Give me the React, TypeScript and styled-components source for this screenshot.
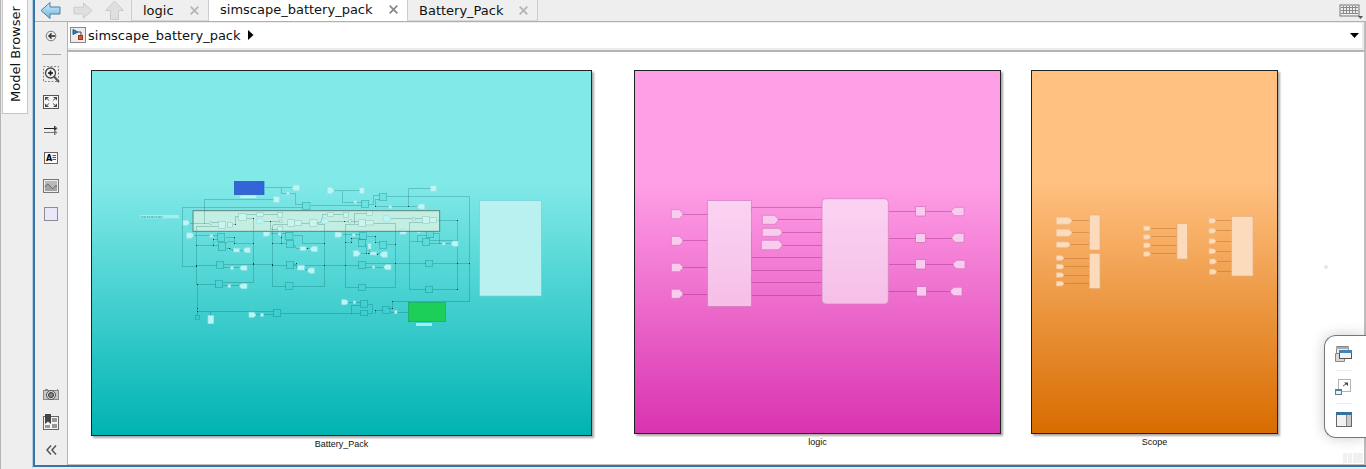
import React from "react";
import styled, { createGlobalStyle } from "styled-components";

const Global = createGlobalStyle`
  * { box-sizing: border-box; }
  body { margin: 0; background: #eeeeee; font-family: "DejaVu Sans", sans-serif; font-size: 13px; color: #111; }
  button { font: inherit; color: inherit; background: none; border: 0; padding: 0; margin: 0; }
  svg { display: block; }
`;

const Shell = styled.div`
  display: flex;
  min-height: 100vh;
`;

const SideStrip = styled.aside`
  width: 32px;
  flex: none;
  border-left: 1px solid #b4b4b4;
  padding-left: 1px;
`;

const SideTab = styled.button`
  display: flex;
  align-items: center;
  justify-content: flex-start;
  width: 26px;
  height: 114px;
  padding-top: 11px;
  background: #fff;
  border: 1px solid #c6c6c6;
  border-bottom: 0;
  writing-mode: vertical-rl;
  transform: rotate(180deg);
  white-space: nowrap;
`;

const Frame = styled.div`
  flex: 1;
  min-width: 0;
  display: flex;
  flex-direction: column;
  border-left: 1px solid #b5cfe4;
  border-bottom: 2px solid #e6eef6;
`;

const Editor = styled.main`
  flex: 1;
  display: flex;
  flex-direction: column;
  border-left: 2px solid #3b74a4;
  border-bottom: 2px solid #3b74a4;
`;

const TabBar = styled.header`
  display: flex;
  align-items: stretch;
  height: 22px;
  border-bottom: 1px solid #b0b0b0;
`;

const NavButtons = styled.div`
  display: flex;
  width: 96px;
  gap: 12px;
  padding-left: 5px;
  flex: none;
`;

const Tab = styled.div<{ $active?: boolean; $width: number }>`
  display: flex;
  align-items: center;
  justify-content: space-between;
  width: ${(p) => p.$width}px;
  height: 21px;
  padding: 0 9px ${(p) => (p.$active ? 3 : 0)}px 11px;
  background: ${(p) => (p.$active ? "#fff" : "#efefef")};
  border-left: 1px solid #cdcdcd;
  border-bottom: ${(p) => (p.$active ? "0" : "1px solid #d8d8d8")};
`;

const TabEnd = styled.div`
  flex: 1;
  display: flex;
  justify-content: flex-end;
  padding: 2px 3px 0 0;
  border-left: 1px solid #cdcdcd;
`;

const Body = styled.div`
  flex: 1;
  display: flex;
`;

const Tools = styled.nav`
  display: flex;
  flex-direction: column;
  align-items: center;
  width: 33px;
  flex: none;
  padding: 4px 0 5px;
  border-right: 1px solid #b4b4b4;
  gap: 8px;
`;

const ToolButton = styled.button`
  display: flex;
  align-items: center;
  justify-content: center;
  width: 24px;
  height: 20px;
`;

const ToolRule = styled.hr`
  width: 19px;
  margin: 0 0 1px;
  border: 0;
  border-top: 1px solid #aaa;
`;

const Spacer = styled.div`
  flex: 1;
`;

const Work = styled.div`
  flex: 1;
  min-width: 0;
  display: flex;
  flex-direction: column;
  border-right: 2px solid #bdbdbd;
`;

const Crumbs = styled.div`
  display: flex;
  align-items: center;
  height: 30px;
  padding: 0 5px 2px 2px;
  gap: 2px;
  background: #fff;
  border-bottom: 2px solid #b4b4b4;
  box-shadow: inset 0 1px #ececec, inset 0 -2px #ececec, inset -2px 0 #ececec;
`;

const Crumb = styled.button`
  display: flex;
  align-items: center;
  gap: 7px;
`;

const Canvas = styled.section`
  position: relative;
  flex: 1;
  display: flex;
  align-items: flex-start;
  padding: 18px 0 8px 23px;
  background: #fff;
  border-bottom: 1px solid #c0c0c0;
`;

const Subsystem = styled.figure<{ $gap: number }>`
  margin: 0 ${(p) => p.$gap}px 0 0;
  flex: none;
`;

const Block = styled.div<{ $w: number; $h: number; $from: string; $to: string; $x: number; $y: number }>`
  width: ${(p) => p.$w}px;
  height: ${(p) => p.$h}px;
  padding: ${(p) => p.$y}px 0 0 ${(p) => p.$x}px;
  border: 1px solid #1c2424;
  background: linear-gradient(${(p) => p.$from} 31%, ${(p) => p.$to});
  box-shadow: 2px 2px 2px rgba(0, 0, 0, 0.35);
`;

const Caption = styled.figcaption`
  padding-top: 3px;
  font: 9px/10px "Liberation Sans", sans-serif;
  text-align: center;
`;

const Speck = styled.span`
  position: absolute;
  right: 36px;
  top: 213px;
  width: 4px;
  height: 4px;
  border-radius: 2px;
  background: #dbe9f1;
`;

const Palette = styled.div`
  position: absolute;
  right: -2px;
  bottom: 26px;
  width: 42px;
  display: flex;
  flex-direction: column;
  align-items: center;
  gap: 6px;
  padding: 8px 4px 7px 0;
  background: #fff;
  border: 1px solid #777;
  border-right: 0;
  border-radius: 12px 0 0 12px;
  box-shadow: 0 0 14px rgba(0, 0, 0, 0.2);
`;

const PaletteButton = styled.button`
  display: flex;
  width: 20px;
  height: 20px;
  align-items: center;
  justify-content: center;
`;

const PaletteRule = styled.hr`
  width: 16px;
  margin: 0;
  border: 0;
  border-top: 1px solid #ececec;
`;

const Resize = styled.div`
  position: absolute;
  right: 1px;
  bottom: 1px;
`;

/* Diagram thumbnails are drawn on a grid of three units to a pixel. */
const snap = (v: number) => Math.floor(v / 3) * 3 + 1.5;

const Wires = ({ data, color }: { data: string[]; color: string }) => (
  <g fill="none" stroke={color} strokeWidth={3} shapeRendering="crispEdges">
    {data.map((line) => (
      <polyline
        key={line}
        points={line
          .split(" ")
          .map((p) => p.split(",").map((v) => snap(Number(v))).join(","))
          .join(" ")}
      />
    ))}
  </g>
);

type Rect = [number, number, number, number];

const Boxes = ({ data, fill, stroke }: { data: Rect[]; fill: string; stroke: string }) => (
  <g fill={fill} stroke={stroke} strokeWidth={2}>
    {data.map(([x, y, w, h]) => (
      <rect key={`${x},${y}`} x={x} y={y} width={w} height={h} />
    ))}
  </g>
);

const Ports = ({ data, fill, stroke, left }: { data: Rect[]; fill: string; stroke: string; left?: boolean }) => (
  <g fill={fill} stroke={stroke} strokeWidth={2}>
    {data.map(([px, py, pw, ph]) => {
      const x = px - 1;
      const y = py - 1;
      const w = pw + 2;
      const h = ph + 2;
      const t = h * 0.38;
      return (
        <path
          key={`${x},${y}`}
          d={
            left
              ? `M${x + w} ${y}H${x + t}L${x} ${y + t}V${y + h - t}L${x + t} ${y + h}H${x + w}Z`
              : `M${x} ${y}H${x + w - t}L${x + w} ${y + t}V${y + h - t}L${x + w - t} ${y + h}H${x}Z`
          }
        />
      );
    })}
  </g>
);

const batteryWires = [
  "402,52 488,52", "455,52 455,70 497,70 497,104 517,104", "223,160 223,88 432,88",
  "157,289 157,112 517,112", "157,289 199,289", "540,106 694,106", "176,160 238,160", "244,158 265,158",
  "199,343 199,168 265,168", "307,163 316,163 316,139 326,139", "349,134 380,134", "349,145 370,145 370,337 278,337",
  "400,134 443,134", "400,154 448,154", "421,154 421,178 443,178", "515,159 539,159",
  "427,163 473,163", "427,163 427,349 467,349", "562,159 575,154", "562,163 583,163 583,349 488,349", "575,154 578,134 592,134",
  "610,134 640,134", "595,154 656,154", "189,197 262,197", "285,202 313,202 313,220 370,220", "250,226 250,208 262,208",
  "199,226 265,226", "287,220 295,214 313,214", "287,235 298,235 310,240 340,240",
  "199,286 260,286", "281,283 427,283", "281,292 330,292", "427,286 470,286", "491,286 646,286",
  "491,286 499,280 499,292 535,300", "202,343 256,343", "278,346 330,346", "202,343 202,436",
  "202,424 430,424", "242,424 242,436", "376,434 430,434", "452,430 692,430",
  "420,191 467,191", "455,191 455,220 470,220", "427,220 455,220", "489,196 517,196 517,220 583,220", "491,224 500,235 545,235",
  "611,61 688,61", "638,61 638,97 694,97", "716,102 730,102 730,76 748,76", "736,109 736,88 748,88", "736,109 865,109",
  "770,79 1018,79 1018,394 787,394 787,415 770,415", "835,109 835,55 901,55",
  "710,130 673,130 673,159", "646,352 646,163 686,163", "646,352 686,352", "706,352 796,352 796,160 731,160",
  "780,145 876,145", "838,358 838,157 876,157", "838,358 886,358", "908,358 982,358 982,151 921,151",
  "660,154 686,154", "646,286 686,286", "706,280 886,280", "908,280 1018,280", "706,292 760,292",
  "635,194 688,194", "664,205 664,217 646,217", "664,205 690,205", "709,199 736,199 736,217 748,217", "770,223 796,223",
  "706,224 718,235 718,250 750,250", "709,229 709,250 690,250", "830,185 888,185", "862,214 862,196 888,196", "838,214 877,214",
  "898,211 982,211", "911,190 928,190 928,220 965,220", "898,220 928,220",
  "653,397 692,397", "664,430 664,406 692,406", "713,403 727,403 727,430 713,430", "736,430 736,421 757,421", "781,426 834,426",
];

const batteryOutlines: Rect[] = [
  [517, 97, 23, 21], [262, 190, 22, 24], [265, 218, 22, 23], [260, 274, 21, 21], [256, 331, 21, 22], [430, 418, 22, 22],
  [467, 187, 22, 22], [469, 211, 22, 22], [469, 274, 22, 22], [467, 338, 22, 20], [196, 436, 12, 12],
  [694, 91, 22, 21], [748, 70, 22, 21], [688, 188, 21, 21], [685, 209, 22, 21], [748, 214, 22, 21], [685, 274, 21, 22],
  [685, 343, 21, 18], [877, 205, 22, 21], [889, 184, 22, 19], [886, 271, 22, 18], [886, 349, 22, 19],
  [692, 391, 21, 21], [692, 421, 21, 16], [757, 409, 23, 21],
];

const batteryFilled: Rect[] = [
  [431, 80, 17, 17], [470, 66, 8, 8], [234, 437, 17, 24], [503, 286, 20, 14], [311, 235, 17, 11], [510, 230, 18, 11],
  [240, 194, 8, 8], [302, 290, 8, 8], [294, 344, 8, 8], [392, 431, 8, 8], [445, 188, 8, 8], [688, 53, 15, 17],
  [902, 47, 17, 17], [672, 92, 8, 8], [777, 107, 8, 8], [714, 221, 9, 16], [721, 246, 18, 9],
  [727, 288, 7, 7], [667, 191, 8, 8], [862, 183, 8, 6], [937, 218, 8, 7], [670, 393, 7, 7], [794, 422, 7, 8],
];

const bandParts: Rect[] = [
  [326, 130, 23, 21], [265, 154, 22, 21], [292, 158, 15, 14], [238, 155, 7, 8], [380, 128, 20, 11], [443, 127, 15, 15],
  [448, 150, 8, 7], [473, 149, 20, 20], [494, 151, 21, 15], [443, 170, 15, 15], [539, 149, 22, 20], [592, 128, 18, 11],
  [640, 127, 15, 15], [656, 149, 8, 8], [686, 149, 21, 20], [707, 152, 23, 13], [710, 122, 17, 14], [847, 143, 9, 7],
  [877, 140, 21, 20], [898, 143, 21, 14],
];

const batteryPorts: Rect[] = [
  [160, 152, 17, 13], [171, 189, 18, 15], [358, 428, 18, 13], [401, 184, 18, 14], [380, 147, 20, 13], [577, 147, 18, 13],
  [593, 53, 18, 17], [616, 187, 19, 14], [636, 390, 17, 13], [761, 137, 20, 17], [811, 179, 19, 13], [671, 243, 18, 15],
];

const batteryPortsLeft: Rect[] = [
  [488, 46, 20, 15], [342, 234, 18, 13], [331, 288, 19, 12], [330, 342, 20, 13], [542, 230, 19, 14], [534, 295, 18, 14],
  [864, 103, 19, 14], [752, 246, 19, 15], [763, 285, 19, 13], [965, 214, 18, 14],
];

const joints: [number, number][] = [
  [199, 226], [250, 226], [250, 208], [313, 202], [313, 220], [298, 235], [370, 220], [370, 280], [370, 283], [199, 286],
  [199, 289], [202, 343], [202, 415], [202, 424], [316, 163], [370, 145], [421, 154], [427, 220], [427, 283], [427, 286],
  [455, 220], [455, 202], [583, 220], [583, 286], [532, 235], [499, 280], [646, 286], [643, 154], [646, 217], [736, 109],
  [835, 109], [736, 199], [736, 217], [796, 223], [796, 280], [664, 205], [664, 217], [709, 250], [715, 250], [742, 252],
  [982, 151], [982, 280], [1018, 280], [982, 358], [787, 394], [787, 415], [736, 421],
];

const BatteryDiagram = () => (
  <svg width="420" height="160" viewBox="0 0 1260 480" aria-hidden="true">
    <rect x="189" y="122" width="740" height="62" fill="#c3eee2" />
    <rect x="1049" y="92" width="185" height="286" fill="#b9f0f0" stroke="#79cfd0" strokeWidth="2" />
    <Wires data={batteryWires} color="rgba(0,80,85,.24)" />
    <Boxes data={batteryOutlines} fill="rgba(60,215,215,.2)" stroke="rgba(0,110,115,.42)" />
    <Boxes data={bandParts} fill="#c9f5ee" stroke="#9bcdc6" />
    <Boxes data={batteryFilled} fill="#bdf5f4" stroke="#9be2e3" />
    <Ports data={batteryPorts} fill="#bdf5f4" stroke="#9be2e3" />
    <Ports data={batteryPortsLeft} fill="#bdf5f4" stroke="#9be2e3" left />
    <rect x="189" y="122" width="740" height="62" fill="none" stroke="#5d8580" strokeWidth="3" />
    <g fill="#063f43">
      {joints.map(([x, y]) => (
        <rect key={`${x},${y}`} x={snap(x) - 1.5} y={snap(y) - 1.5} width="3" height="3" />
      ))}
    </g>
    <rect x="313" y="34" width="89" height="40" fill="#3465d8" stroke="#2b57b8" strokeWidth="2" />
    <rect x="331" y="76" width="48" height="8" fill="#b9f5f5" />
    <rect x="835" y="397" width="111" height="58" fill="#1ccf58" stroke="#1ba766" strokeWidth="2" />
    <rect x="858" y="459" width="48" height="9" fill="#a2eeee" />
    <rect x="31" y="135" width="116" height="10" fill="#a4eeee" />
    <path d="M33 141H98" stroke="#3b999c" strokeWidth="3" strokeDasharray="5 2 9 2 3 1" />
  </svg>
);

const logicWires = [
  "66,73 143,73", "66,152 143,152", "66,232 143,232", "66,313 143,313",
  "275,64 275,52 486,52", "353,88 486,88", "365,127 486,127", "366,165 486,165",
  "275,127 275,202 486,202", "275,202 275,241 486,241", "275,253 275,277 486,277", "275,316 486,316",
  "685,64 876,64", "685,145 876,145", "685,223 881,223", "685,304 873,304",
];

const LogicDiagram = () => (
  <svg width="320" height="130" viewBox="0 0 960 390" aria-hidden="true">
    <defs>
      <linearGradient id="pinkPanel" x1="0" y1="0" x2="0" y2="1">
        <stop offset="0" stopColor="#fbd2f2" />
        <stop offset="1" stopColor="#f5bfe8" />
      </linearGradient>
    </defs>
    <Wires data={logicWires} color="rgba(120,10,100,.3)" />
    <g fill="url(#pinkPanel)" stroke="#cb80b9" strokeWidth="2">
      <rect x="143" y="32" width="131" height="317" />
      <rect x="486" y="26" width="199" height="316" rx="12" />
    </g>
    <Ports
      data={[[35, 60, 32, 25], [35, 140, 32, 25], [35, 221, 32, 23], [35, 299, 32, 25], [308, 77, 45, 25], [308, 116, 57, 22], [305, 152, 60, 26]]}
      fill="#f9cbee"
      stroke="#d078ba"
    />
    <Ports data={[[876, 53, 35, 23], [877, 131, 34, 25], [881, 212, 33, 23], [873, 293, 32, 23]]} fill="#f9cbee" stroke="#d078ba" left />
    <Boxes data={[[767, 50, 29, 28], [767, 131, 29, 26], [767, 209, 29, 28], [770, 290, 29, 28]]} fill="#f9cbee" stroke="#c772b2" />
  </svg>
);

const scopeWires = [
  "94,62 147,62", "94,98 147,98", "89,133 147,133", "70,175 147,175", "70,200 147,200", "70,226 147,226", "70,251 147,251",
  "330,86 410,86", "330,109 410,109", "330,136 410,136", "330,160 410,160",
  "527,62 575,62", "527,92 575,92", "527,125 575,125", "527,154 575,154", "529,185 575,185", "529,215 575,215",
];

const ScopeDiagram = () => (
  <svg width="230" height="100" viewBox="0 0 690 300" aria-hidden="true">
    <Wires data={scopeWires} color="rgba(140,75,10,.28)" />
    <Boxes data={[[148, 45, 32, 105], [148, 160, 32, 105], [411, 71, 31, 106], [575, 49, 64, 179]]} fill="#fbdbbb" stroke="#dfb084" />
    <Ports
      data={[
        [50, 53, 44, 19], [50, 89, 44, 19], [50, 127, 39, 14], [50, 168, 20, 12], [50, 194, 20, 12], [50, 219, 20, 12], [50, 245, 20, 12],
        [312, 79, 18, 12], [312, 105, 18, 12], [312, 130, 18, 12], [312, 156, 18, 12],
        [508, 56, 18, 13], [508, 86, 18, 13], [508, 117, 18, 13], [508, 147, 18, 13], [510, 178, 18, 13], [510, 209, 18, 13],
      ]}
      fill="#fbdcbd"
      stroke="#eec096"
    />
  </svg>
);

const CloseButton = ({ active, name }: { active?: boolean; name: string }) => (
  <button aria-label={`Close ${name}`}>
    <svg width="9" height="9" viewBox="0 0 9 9" stroke={active ? "#8a8a8a" : "#b6b6b6"} strokeWidth="1.8">
      <path d="M.7 .7L8.3 8.3M8.3 .7L.7 8.3" />
    </svg>
  </button>
);

const tabs = [
  { name: "logic", width: 77 },
  { name: "simscape_battery_pack", width: 199, active: true },
  { name: "Battery_Pack", width: 130 },
];

export default function App() {
  return (
    <>
      <Global />
      <Shell>
        <SideStrip>
          <SideTab>Model Browser</SideTab>
        </SideStrip>
        <Frame>
          <Editor>
            <TabBar>
              <NavButtons>
                <button aria-label="Back">
                  <svg width="21" height="20" viewBox="0 0 21 20">
                    <defs>
                      <linearGradient id="backFill" x1="0" y1="0" x2="0" y2="1">
                        <stop offset="0" stopColor="#d3ecfb" />
                        <stop offset="1" stopColor="#71b4e0" />
                      </linearGradient>
                    </defs>
                    <path d="M1 9.5L10 1.5V6H20V13H10V17.5Z" fill="url(#backFill)" stroke="#4b80a5" />
                  </svg>
                </button>
                <button aria-label="Forward">
                  <svg width="20" height="20" viewBox="0 0 21 20">
                    <path d="M20 9.5L11 1.5V6H1V13H11V17.5Z" fill="#dfdfdf" stroke="#cacaca" />
                  </svg>
                </button>
                <button aria-label="Up">
                  <svg width="19" height="20" viewBox="0 0 19 20">
                    <path d="M9.5 0L18.3 9.5H13.5V18.5H5.5V9.5H.7Z" fill="#dfdfdf" stroke="#cacaca" />
                  </svg>
                </button>
              </NavButtons>
              {tabs.map((t) => (
                <Tab key={t.name} $active={t.active} $width={t.width}>
                  <button>{t.name}</button>
                  <CloseButton active={t.active} name={t.name} />
                </Tab>
              ))}
              <TabEnd>
                <button aria-label="Keyboard shortcuts">
                  <svg width="24" height="16" viewBox="0 0 24 16">
                    <rect x="1" y="1" width="19" height="11" fill="#eee" stroke="#777" />
                    <path d="M2 3.5H19M2 6.5H19M2 9.5H19" stroke="#8a8a8a" />
                    <path d="M4.5 2V9M7.5 2V9M10.5 2V9M13.5 2V9M16.5 2V9" stroke="#8a8a8a" />
                    <path d="M19 12H24L21.5 15Z" fill="#555" />
                  </svg>
                </button>
              </TabEnd>
            </TabBar>
            <Body>
              <Tools aria-label="Canvas tools">
                <ToolButton aria-label="Hide browser">
                  <svg width="12" height="12" viewBox="0 0 12 12" fill="none" stroke="#555">
                    <circle cx="6" cy="6" r="4.8" stroke="#777" />
                    <path d="M6.5 3L3.5 6L6.5 9" fill="#333" stroke="#333" />
                    <path d="M6 6H10" strokeWidth="2" />
                  </svg>
                </ToolButton>
                <ToolRule />
                <ToolButton aria-label="Zoom">
                  <svg width="18" height="18" viewBox="0 0 18 18" fill="none">
                    <rect x="1.5" y="1.5" width="15" height="15" stroke="#888" strokeDasharray="2 1.5" />
                    <circle cx="8.5" cy="8" r="5" fill="#f2f2f2" stroke="#444" strokeWidth="1.3" />
                    <path d="M8.5 5.5V10.5M6 8H11" stroke="#111" strokeWidth="1.6" />
                    <path d="M12 11.5L17 17" stroke="#555" strokeWidth="2" />
                  </svg>
                </ToolButton>
                <ToolButton aria-label="Fit to view">
                  <svg width="16" height="14" viewBox="0 0 16 14" fill="none">
                    <rect x=".5" y=".5" width="15" height="13" fill="#f7f7f7" stroke="#555" />
                    <path d="M2 2H6L2 5.5ZM14 2H10L14 5.5ZM2 12H6L2 8.5ZM14 12H10L14 8.5Z" fill="#444" />
                    <path d="M3 3L6.2 5.6M13 3L9.8 5.6M3 11L6.2 8.4M13 11L9.8 8.4" stroke="#555" />
                  </svg>
                </ToolButton>
                <ToolButton aria-label="Sample time">
                  <svg width="14" height="12" viewBox="0 0 14 12" fill="none">
                    <path d="M0 4.5H12" stroke="#222" />
                    <path d="M10.5 2L13 4.5L10.5 6.5Z" stroke="#333" />
                    <path d="M0 8.5H12M10.5 6.5L13 8.5L10.5 11Z" stroke="#777" />
                  </svg>
                </ToolButton>
                <ToolButton aria-label="Annotation">
                  <svg width="14" height="12" viewBox="0 0 14 12">
                    <rect x=".5" y=".5" width="13" height="11" fill="#fafafa" stroke="#666" />
                    <text x="2" y="9" fontSize="8" fontWeight="700" fontFamily="DejaVu Sans, sans-serif">A</text>
                    <path d="M8.5 3.5H12M8.5 5.5H12M8.5 7.5H12" stroke="#555" />
                  </svg>
                </ToolButton>
                <ToolButton aria-label="Image">
                  <svg width="16" height="14" viewBox="0 0 16 14">
                    <rect x=".5" y=".5" width="15" height="13" fill="#eee" stroke="#777" />
                    <rect x="2" y="2" width="12" height="10" fill="#b9b9b9" />
                    <path d="M2 8Q4.5 3 7 7T11 8T14 6V12H2Z" fill="#a3a3a3" />
                    <path d="M2 8Q4.5 3 7 7T11 8.5T14 7" fill="none" stroke="#666" />
                  </svg>
                </ToolButton>
                <ToolButton aria-label="Area">
                  <svg width="14" height="14" viewBox="0 0 14 14">
                    <rect x=".5" y=".5" width="13" height="13" fill="#e8e8f8" stroke="#8c8c94" />
                  </svg>
                </ToolButton>
                <Spacer />
                <ToolButton aria-label="Screenshot">
                  <svg width="16" height="13" viewBox="0 0 16 13">
                    <path d="M2 1H5V2H14V1H15V2H16V12H0V2H2Z" fill="#888" />
                    <rect x="1" y="3" width="14" height="8" fill="#c9c9c9" />
                    <circle cx="8" cy="7" r="4.5" fill="#ddd" stroke="#555" />
                    <circle cx="8" cy="7" r="2.5" fill="#888" stroke="#333" />
                  </svg>
                </ToolButton>
                <ToolButton aria-label="Viewmarks">
                  <svg width="16" height="16" viewBox="0 0 16 16">
                    <rect x=".5" y="2.5" width="15" height="13" fill="#f4f4f4" stroke="#666" />
                    <path d="M9 4H14V8H9ZM9 10H14V14H9ZM2 11H7V14H2Z" fill="#999" />
                    <path d="M2 0H8V10L5 7.5L2 10Z" fill="#444" />
                  </svg>
                </ToolButton>
                <ToolButton aria-label="Collapse">
                  <svg width="11" height="10" viewBox="0 0 11 10" fill="none" stroke="#555" strokeWidth="1.5">
                    <path d="M5 .5L1 5L5 9.500M10 .5L6 5L10 9.5" />
                  </svg>
                </ToolButton>
              </Tools>
              <Work>
                <Crumbs>
                  <Crumb aria-label="Model root">
                    <svg width="16" height="16" viewBox="0 0 16 16">
                      <rect x=".5" y=".5" width="15" height="15" fill="#ececec" stroke="#888" />
                      <path d="M3 2.5L8 5L3 7.5Z" fill="#2b83b5" stroke="#175f8c" />
                      <path d="M8 5H11V8" fill="none" stroke="#444" />
                      <rect x="8.5" y="8.5" width="4" height="4" fill="#d9532c" stroke="#a83214" />
                    </svg>
                  </Crumb>
                  <Crumb>
                    simscape_battery_pack
                    <svg width="6" height="10" viewBox="0 0 6 10">
                      <path d="M0 0L5.5 5L0 10Z" />
                    </svg>
                  </Crumb>
                  <Spacer />
                  <button aria-label="Show path menu">
                    <svg width="9" height="5" viewBox="0 0 9 5">
                      <path d="M0 0H9L4.5 5Z" />
                    </svg>
                  </button>
                </Crumbs>
                <Canvas>
                  <Subsystem $gap={42}>
                    <Block $w={501} $h={366} $x={38} $y={99} $from="#81e9e8" $to="#00b3b3">
                      <BatteryDiagram />
                    </Block>
                    <Caption>Battery_Pack</Caption>
                  </Subsystem>
                  <Subsystem $gap={30}>
                    <Block $w={367} $h={364} $x={25} $y={119} $from="#ff9fe6" $to="#d933b0">
                      <LogicDiagram />
                    </Block>
                    <Caption>logic</Caption>
                  </Subsystem>
                  <Subsystem $gap={0}>
                    <Block $w={247} $h={364} $x={8} $y={129} $from="#ffc080" $to="#d86c00">
                      <ScopeDiagram />
                    </Block>
                    <Caption>Scope</Caption>
                  </Subsystem>
                  <Speck />
                  <Palette>
                    <PaletteButton aria-label="Open in window">
                      <svg width="18" height="17" viewBox="0 0 18 17">
                        <path d="M1.5 .5H13.5V10.5H1.5Z" fill="#eee" stroke="#888" />
                        <path d="M1 1H14V3H1Z" fill="#aaa" />
                        <path d="M.5 7.5H9.5V15.5H.5Z" fill="#d8d8d8" stroke="#888" />
                        <rect x="4.5" y="4.5" width="12" height="8" fill="#f3f3f3" stroke="#555" />
                        <path d="M4 4H17V7H4Z" fill="#3d84ba" />
                      </svg>
                    </PaletteButton>
                    <PaletteRule />
                    <PaletteButton aria-label="Move palette">
                      <svg width="18" height="17" viewBox="0 0 18 17">
                        <rect x="3.5" y=".5" width="12" height="12" fill="none" stroke="#666" strokeDasharray="1 1" />
                        <path d="M8 7L11 5" stroke="#555" />
                        <path d="M9 3.5H13V7Z" fill="#444" />
                        <rect x=".5" y="10.5" width="6" height="5" fill="#eee" stroke="#777" />
                        <path d="M0 10H7V12H0Z" fill="#3d84ba" />
                      </svg>
                    </PaletteButton>
                    <PaletteRule />
                    <PaletteButton aria-label="Dock panel">
                      <svg width="16" height="16" viewBox="0 0 16 16">
                        <rect x=".5" y=".5" width="15" height="14" fill="#f2f2f2" stroke="#666" />
                        <path d="M11 3H15V14H11Z" fill="#ccc" />
                        <path d="M10.5 3V14" stroke="#888" />
                        <path d="M0 0H16V3H0Z" fill="#3572a0" />
                      </svg>
                    </PaletteButton>
                  </Palette>
                  <Resize>
                    <svg width="20" height="10" viewBox="0 0 20 10">
                      <path d="M0 0H4V10H0ZM5 0H9V10H5ZM10 0H20V10H10Z" fill="#f0f0f0" />
                    </svg>
                  </Resize>
                </Canvas>
              </Work>
            </Body>
          </Editor>
        </Frame>
      </Shell>
    </>
  );
}
